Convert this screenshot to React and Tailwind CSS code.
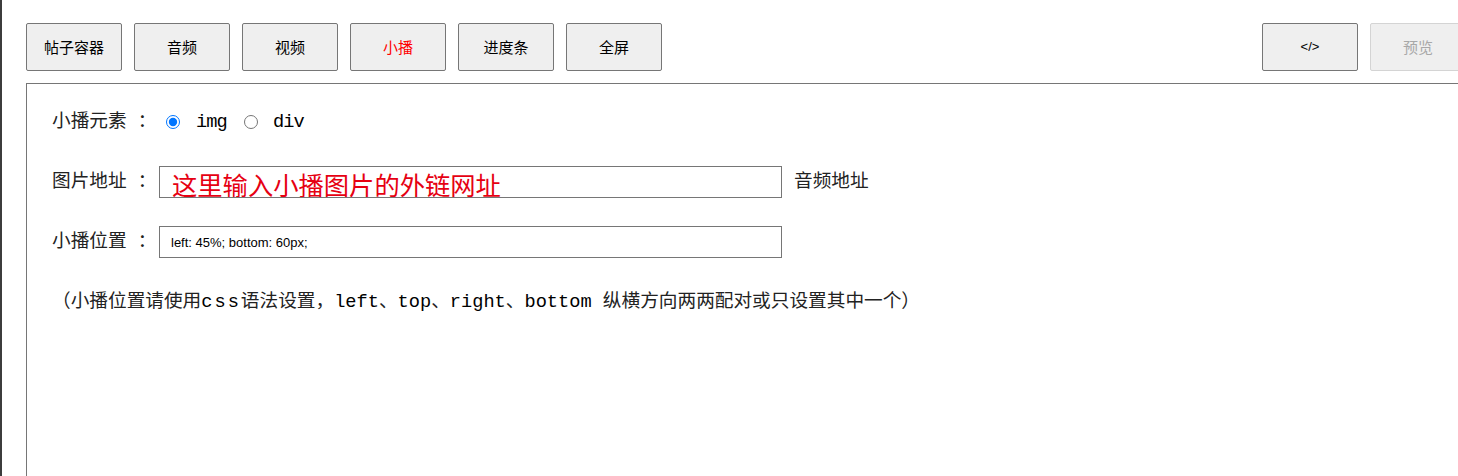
const tabs = ["帖子容器", "音频", "视频", "小播", "进度条", "全屏"];

const mono = "font-['Liberation_Mono','Noto_Sans_CJK_SC',monospace]";

const Tab = ({ label, active }) => (
  <button
    className={`w-[96px] h-[48px] rounded-[2px] border border-[#767676] bg-[#efefef] text-[15px] font-['Noto_Sans_CJK_SC',sans-serif] ${
      active ? "text-[#ff0000]" : "text-black"
    }`}
  >
    {label}
  </button>
);

const Code = ({ children, className = "" }) => (
  <span className={`text-black ${className}`}>{children}</span>
);

export default function App() {
  return (
    <div className="flex h-[476px] w-[1458px] overflow-hidden bg-white">
      <div className="w-[2px] shrink-0 bg-[#3c3c3c]" />

      <div className="w-[1464px] shrink-0 pl-[24px] pt-[23px]">
        {/* Toolbar */}
        <div className="flex gap-[12px]">
          {tabs.map((t) => (
            <Tab key={t} label={t} active={t === "小播"} />
          ))}
          <div className="ml-auto flex gap-[12px]">
            <button className="w-[96px] h-[48px] rounded-[2px] border border-[#767676] bg-[#efefef] text-[13px] text-black font-['Liberation_Sans',sans-serif]">
              &lt;/&gt;
            </button>
            <button
              disabled
              className="w-[96px] h-[48px] rounded-[2px] border border-[#d4d4d4] bg-[#efefef] text-[15px] text-[#a8a8a8] font-['Noto_Sans_CJK_SC',sans-serif]"
            >
              预览
            </button>
          </div>
        </div>

        {/* Panel */}
        <div className={`mt-[12px] h-[420px] border border-[#767676] pl-[25px] pt-[23px] text-[18.67px] text-[#222] ${mono}`}>
          <div className="flex h-[30px] items-center">
            <span className="w-[107px]">小播元素 ：</span>
            <input type="radio" name="el" defaultChecked className="m-0 ml-[7px] h-[14px] w-[14px] accent-[#0075ff]" />
            <span className="ml-[16px]"><Code className="tracking-[-0.9px]">img</Code></span>
            <input type="radio" name="el" className="m-0 ml-[17px] h-[14px] w-[14px]" />
            <span className="ml-[15px]"><Code className="tracking-[-0.9px]">div</Code></span>
          </div>

          <div className="mt-[29px] flex h-[32px] items-center">
            <span className="w-[107px]">图片地址 ：</span>
            <input
              type="text"
              defaultValue="这里输入小播图片的外链网址"
              className="h-[32px] w-[623px] border border-[#767676] pl-[12px] pt-[4px] text-[25.3px] leading-none text-[#e60012] outline-none font-['Noto_Sans_CJK_SC',sans-serif]"
            />
            <span className="ml-[12px]">音频地址</span>
          </div>

          <div className="mt-[28px] flex h-[32px] items-center">
            <span className="w-[107px]">小播位置 ：</span>
            <input
              type="text"
              defaultValue="left: 45%; bottom: 60px;"
              className="h-[32px] w-[623px] border border-[#767676] pl-[11px] text-[13px] text-black outline-none font-['Liberation_Sans',sans-serif]"
            />
          </div>

          <p className="mt-[31px] h-[26px] leading-[26px]">
            （小播位置请使用<Code className="tracking-[2px]">css</Code>语法设置，<Code>left</Code>、<Code>top</Code>、<Code>right</Code>、<Code>bottom </Code>纵横方向两两配对或只设置其中一个）
          </p>
        </div>
      </div>
    </div>
  );
}
